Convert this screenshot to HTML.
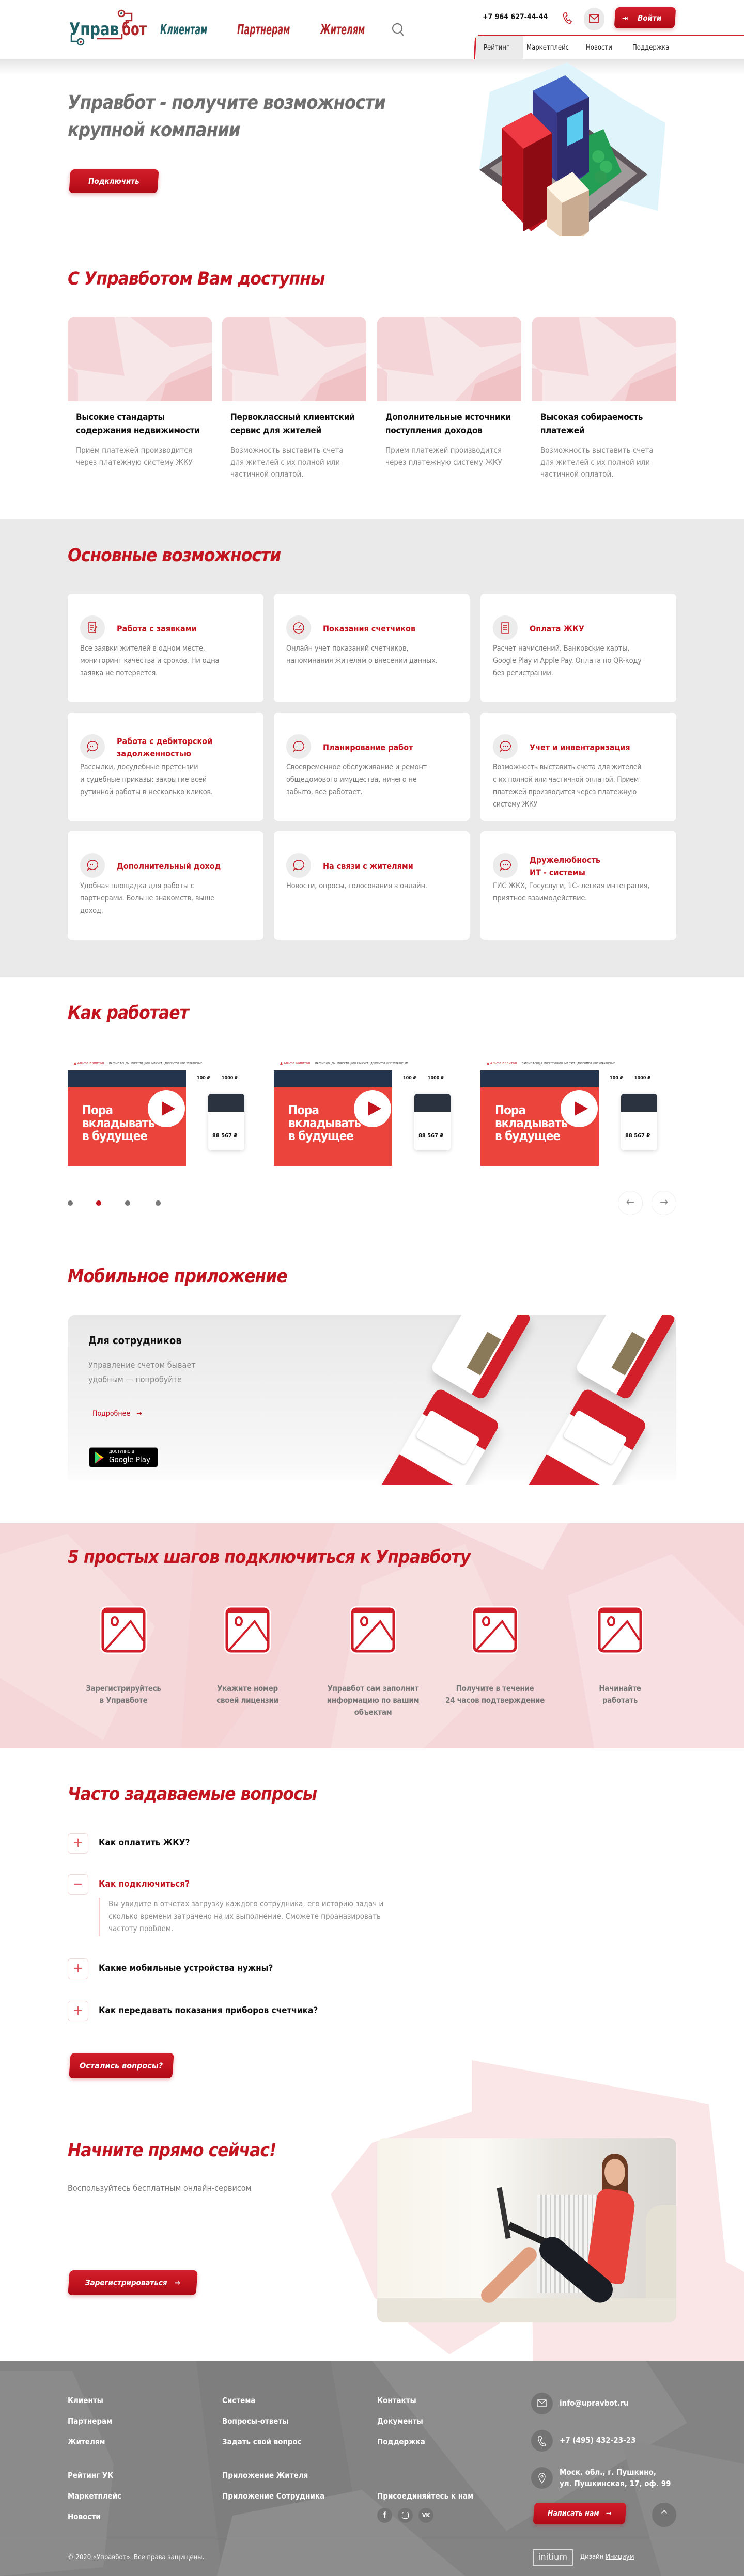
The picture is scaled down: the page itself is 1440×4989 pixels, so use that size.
<!DOCTYPE html>
<html lang="ru"><head><meta charset="utf-8"><title>Управбот</title>
<style>
*{margin:0;padding:0;box-sizing:border-box}
body{width:1440px;height:4989px;position:relative;background:#fff;font-family:"DejaVu Sans Condensed","Liberation Sans",sans-serif;overflow:hidden;color:#222}
.a{position:absolute}
.nw{white-space:nowrap}
.h2{position:absolute;left:131px;font-size:35px;font-weight:bold;font-style:italic;color:#c3151f;letter-spacing:-1px;white-space:nowrap;transform-origin:left}
.btn{position:absolute;background:linear-gradient(180deg,#d31f2a,#b00916);color:#fff;font-style:italic;font-weight:bold;border-radius:8px;transform:skewX(-4deg);display:flex;align-items:center;justify-content:center;font-size:16px;box-shadow:0 3px 8px rgba(176,9,22,.3);white-space:nowrap}
.btn span{transform:skewX(4deg)}
.c2{position:absolute;top:613px;width:279px}
.c2 .img{height:164px;border-radius:14px 14px 0 0;background:#f4d4d6;position:relative;overflow:hidden}
.c2 h4{margin:18px 16px 0;font-size:17px;line-height:26px;color:#111;white-space:nowrap;letter-spacing:-.3px}
.c2 p{margin:14px 16px 0;font-size:15px;line-height:23px;color:#8a8a8a;white-space:nowrap}
.fc{position:absolute;width:379px;height:210px;background:#fff;border-radius:8px}
.fc .ic{position:absolute;left:24px;top:42px;width:48px;height:48px;border-radius:50%;background:#ececec}
.fc h4{position:absolute;left:95px;top:44px;right:10px;font-size:16px;line-height:24px;color:#c3151f;height:48px;display:flex;align-items:center;white-space:nowrap}
.fc p{position:absolute;left:24px;top:94px;right:10px;font-size:14.5px;line-height:24px;color:#7b7b7b;white-space:nowrap;letter-spacing:-.2px}
.vid{position:absolute;top:2043px;width:379px;height:215px;background:#fff;overflow:hidden}
.step{position:absolute;top:3107px;width:220px;text-align:center}
.step svg{margin-left:60px;display:block}
.step p{margin-top:52px;font-size:15px;line-height:23px;color:#777;font-weight:bold;white-space:nowrap;letter-spacing:-.3px}
.fq{position:absolute;left:131px;width:40px;height:40px;border:1px solid #f5d6d8;border-radius:7px;color:#e05a64;font-size:26px;line-height:36px;text-align:center;background:#fff}
.fqt{position:absolute;left:191px;font-size:17px;font-weight:bold;color:#111;white-space:nowrap}
.fl{position:absolute;color:#fff;font-size:15px;font-weight:bold;white-space:nowrap}
.fi{position:absolute;left:1028px;width:42px;height:42px;border-radius:50%;background:#737373}
.sq{display:inline-block;transform:scaleX(.72);transform-origin:left;white-space:nowrap}
</style></head><body>

<!-- HEADER -->
<div class="a" style="left:0;top:0;width:1440px;height:115px;background:#fff;z-index:2"></div>
<div class="a" style="left:0;top:115px;width:1440px;height:30px;background:linear-gradient(#e6e6e6,#fff)"></div>
<svg class="a" style="left:128px;top:18px;z-index:3" width="160" height="75" viewBox="0 0 160 75">
 <circle cx="107" cy="8" r="6" fill="none" stroke="#b0262a" stroke-width="2.5"/><circle cx="107" cy="8" r="2" fill="#1f5f66"/>
 <path d="M113 8 H127 V22 H116 V34" fill="none" stroke="#b0262a" stroke-width="2.5"/>
 <path d="M10 50 V62 H22" fill="none" stroke="#1f5f66" stroke-width="2.5"/>
 <circle cx="28" cy="63" r="6" fill="none" stroke="#1f5f66" stroke-width="2.5"/><circle cx="28" cy="63" r="2" fill="#b0262a"/>
 <path d="M60 57 H108 V48" fill="none" stroke="#b0262a" stroke-width="2.5"/>
 <text x="6" y="50" font-family="DejaVu Sans Condensed,sans-serif" font-weight="bold" font-size="34" fill="#1f5f66" textLength="96" lengthAdjust="spacingAndGlyphs">Управ</text>
 <text x="108" y="50" font-family="DejaVu Sans Condensed,sans-serif" font-weight="bold" font-size="34" fill="#b0262a" textLength="48" lengthAdjust="spacingAndGlyphs">бот</text>
</svg>
<div class="a" style="left:310px;top:42px;font-size:27px;font-weight:bold;font-style:italic;color:#1f5f66;z-index:3"><span class="sq" style="transform:scaleX(.66)">Клиентам</span></div>
<div class="a" style="left:459px;top:42px;font-size:27px;font-weight:bold;font-style:italic;color:#b0262a;z-index:3"><span class="sq" style="transform:scaleX(.66)">Партнерам</span></div>
<div class="a" style="left:620px;top:42px;font-size:27px;font-weight:bold;font-style:italic;color:#b0262a;z-index:3"><span class="sq" style="transform:scaleX(.66)">Жителям</span></div>
<svg class="a" style="left:758px;top:44px;z-index:3" width="26" height="28"><circle cx="11" cy="11" r="9" fill="none" stroke="#777" stroke-width="2.2"/><path d="M17 18 L23 25" stroke="#777" stroke-width="2.4"/></svg>
<div class="a nw" style="left:934px;top:25px;font-size:14px;color:#111;z-index:3;font-weight:bold">+7 964 627-44-44</div>
<svg class="a" style="left:1088px;top:22px;z-index:3" width="22" height="26" viewBox="0 0 22 26"><path d="M5 3 C2 5 2 9 5 15 C8 21 12 24 16 23 L18 20 L14 16 L11 18 C9 16 7 12 7 10 L10 8 L8 3 Z" fill="none" stroke="#c3151f" stroke-width="1.6"/></svg>
<div class="a" style="left:1130px;top:15px;width:40px;height:44px;border-radius:20px;background:#eaeaea;z-index:3"></div>
<svg class="a" style="left:1140px;top:27px;z-index:4" width="20" height="18"><rect x="1" y="2" width="18" height="14" fill="none" stroke="#c3151f" stroke-width="1.8"/><path d="M1 2 L10 10 L19 2" fill="none" stroke="#c3151f" stroke-width="1.8"/></svg>
<div class="btn" style="left:1190px;top:14px;width:117px;height:41px;z-index:3;font-size:15px;justify-content:flex-start;padding-left:14px"><span>⇥&nbsp;&nbsp;&nbsp;&nbsp;Войти</span></div>
<div class="a" style="left:918px;top:67px;width:522px;height:48px;border-top:3px solid #d3202b;border-left:3px solid #d3202b;border-radius:12px 0 0 0;transform:skewX(-3deg);z-index:3"></div>
<div class="a" style="left:922px;top:70px;width:90px;height:45px;background:#ebebeb;z-index:3"></div>
<div class="a nw" style="left:936px;top:85px;font-size:13px;color:#222;z-index:4">Рейтинг</div>
<div class="a nw" style="left:1019px;top:85px;font-size:13px;color:#222;z-index:4">Маркетплейс</div>
<div class="a nw" style="left:1134px;top:85px;font-size:13px;color:#222;z-index:4">Новости</div>
<div class="a nw" style="left:1224px;top:85px;font-size:13px;color:#222;z-index:4">Поддержка</div>

<!-- HERO -->
<div class="a nw" style="left:131px;top:172px;font-size:37px;line-height:53px;font-weight:bold;font-style:italic;color:#6f6f6f;letter-spacing:-1px;transform:scaleX(.97);transform-origin:left">Управбот - получите возможности<br>крупной компании</div>
<div class="btn" style="left:135px;top:328px;width:171px;height:46px;font-size:15px"><span>Подключить</span></div>
<svg class="a" style="left:918px;top:118px" width="380" height="340" viewBox="0 0 380 340">
 <path d="M180 3 L290 75 L370 120 L355 290 L170 240 L10 210 L30 60 Z" fill="#dff4fb"/>
 <path d="M10 211 L180 100 L335 220 L187 340 Z" fill="#5e555a"/>
 <path d="M30 208 L180 112 L315 218 L187 320 Z" fill="#a19b9b"/>
 <path d="M140 180 L250 132 L285 215 L195 282 Z" fill="#259e55"/>
 <path d="M113 58 L176 28 L222 70 L222 215 L176 250 L113 190 Z" fill="#3a3a8c"/>
 <path d="M113 58 L176 28 L222 70 L160 100 Z" fill="#4566c4"/>
 <path d="M160 100 L222 70 L222 215 L160 250 Z" fill="#2e2b6e"/>
 <path d="M180 110 L210 95 L210 150 L180 165 Z" fill="#5bcbf0"/>
 <path d="M53 130 L110 100 L150 140 L150 300 L110 330 L53 270 Z" fill="#b8121c"/>
 <path d="M53 130 L110 100 L150 140 L95 170 Z" fill="#ef3a44"/>
 <path d="M95 170 L150 140 L150 300 L95 330 Z" fill="#8d0c14"/>
 <path d="M140 245 L190 215 L222 250 L222 330 L190 360 L140 320 Z" fill="#e9d3bb"/>
 <path d="M140 245 L190 215 L222 250 L170 275 Z" fill="#fff7e8"/>
 <path d="M170 275 L222 250 L222 330 L170 360 Z" fill="#c9ab92"/>
 <circle cx="240" cy="185" r="12" fill="#38b560"/><circle cx="255" cy="205" r="12" fill="#38b560"/><circle cx="245" cy="225" r="12" fill="#2e9c52"/>
</svg>

<!-- SECTION 2 -->
<div class="h2" style="top:520px">С Управботом Вам доступны</div>
<div class="c2" style="left:131px"><div class="img"><svg width="279" height="164"><path d="M90 0 L120 0 L200 60 L279 50 L279 70 L200 110 L150 164 L20 164 L20 110 L0 90 L0 100 L110 115 Z" fill="#f8e7e8"/><path d="M190 130 L279 95 L279 164 L180 164 Z" fill="#f0c2c6"/></svg></div><h4>Высокие стандарты<br>содержания недвижимости</h4><p>Прием платежей производится<br>через платежную систему ЖКУ</p></div>
<div class="c2" style="left:430px"><div class="img"><svg width="279" height="164"><path d="M90 0 L120 0 L200 60 L279 50 L279 70 L200 110 L150 164 L20 164 L20 110 L0 90 L0 100 L110 115 Z" fill="#f8e7e8"/><path d="M190 130 L279 95 L279 164 L180 164 Z" fill="#f0c2c6"/></svg></div><h4>Первоклассный клиентский<br>сервис для жителей</h4><p>Возможность выставить счета<br>для жителей с их полной или<br>частичной оплатой.</p></div>
<div class="c2" style="left:730px"><div class="img"><svg width="279" height="164"><path d="M90 0 L120 0 L200 60 L279 50 L279 70 L200 110 L150 164 L20 164 L20 110 L0 90 L0 100 L110 115 Z" fill="#f8e7e8"/><path d="M190 130 L279 95 L279 164 L180 164 Z" fill="#f0c2c6"/></svg></div><h4>Дополнительные источники<br>поступления доходов</h4><p>Прием платежей производится<br>через платежную систему ЖКУ</p></div>
<div class="c2" style="left:1030px"><div class="img"><svg width="279" height="164"><path d="M90 0 L120 0 L200 60 L279 50 L279 70 L200 110 L150 164 L20 164 L20 110 L0 90 L0 100 L110 115 Z" fill="#f8e7e8"/><path d="M190 130 L279 95 L279 164 L180 164 Z" fill="#f0c2c6"/></svg></div><h4>Высокая собираемость<br>платежей</h4><p>Возможность выставить счета<br>для жителей с их полной или<br>частичной оплатой.</p></div>

<!-- FEATURES -->
<div class="a" style="left:0;top:1006px;width:1440px;height:886px;background:#eaeaea"></div>
<div class="h2" style="top:1056px">Основные возможности</div>
<div class="fc" style="left:131px;top:1150px"><div class="ic"><svg width="48" height="48"><rect x="17" y="13" width="13" height="20" rx="1" fill="none" stroke="#c3151f" stroke-width="1.4"/><path d="M20 19h7M20 23h7M20 27h4M27 30l6-10" stroke="#c3151f" stroke-width="1.4"/></svg></div><h4>Работа с заявками</h4><p>Все заявки жителей в одном месте,<br>мониторинг качества и сроков. Ни одна<br>заявка не потеряется.</p></div>
<div class="fc" style="left:530px;top:1150px"><div class="ic"><svg width="48" height="48"><circle cx="24" cy="24" r="10" fill="none" stroke="#c3151f" stroke-width="1.5"/><path d="M24 24l4-5M17 28h14" stroke="#c3151f" stroke-width="1.5"/></svg></div><h4>Показания счетчиков</h4><p>Онлайн учет показаний счетчиков,<br>напоминания жителям о внесении данных.</p></div>
<div class="fc" style="left:930px;top:1150px"><div class="ic"><svg width="48" height="48"><rect x="17" y="14" width="14" height="20" fill="none" stroke="#c3151f" stroke-width="1.4"/><path d="M20 19h8M20 23h8M20 27h8" stroke="#c3151f" stroke-width="1.4"/></svg></div><h4>Оплата ЖКУ</h4><p>Расчет начислений. Банковские карты,<br>Google Play и Apple Pay. Оплата по QR-коду<br>без регистрации.</p></div>
<div class="fc" style="left:131px;top:1380px"><div class="ic"><svg width="48" height="48"><path d="M24 14a10 9 0 1 1-6 16l-3 3 1-5a10 9 0 0 1 8-14z" fill="none" stroke="#c3151f" stroke-width="1.4"/><path d="M20 23h1M24 23h1M28 23h1" stroke="#c3151f" stroke-width="2"/></svg></div><h4>Работа с дебиторской<br>задолженностью</h4><p>Рассылки, досудебные претензии<br>и судебные приказы: закрытие всей<br>рутинной работы в несколько кликов.</p></div>
<div class="fc" style="left:530px;top:1380px"><div class="ic"><svg width="48" height="48"><path d="M24 14a10 9 0 1 1-6 16l-3 3 1-5a10 9 0 0 1 8-14z" fill="none" stroke="#c3151f" stroke-width="1.4"/><path d="M20 23h1M24 23h1M28 23h1" stroke="#c3151f" stroke-width="2"/></svg></div><h4>Планирование работ</h4><p>Своевременное обслуживание и ремонт<br>общедомового имущества, ничего не<br>забыто, все работает.</p></div>
<div class="fc" style="left:930px;top:1380px"><div class="ic"><svg width="48" height="48"><path d="M24 14a10 9 0 1 1-6 16l-3 3 1-5a10 9 0 0 1 8-14z" fill="none" stroke="#c3151f" stroke-width="1.4"/><path d="M20 23h1M24 23h1M28 23h1" stroke="#c3151f" stroke-width="2"/></svg></div><h4>Учет и инвентаризация</h4><p style="font-size:14px">Возможность выставить счета для жителей<br>с их полной или частичной оплатой. Прием<br>платежей производится через платежную<br>систему ЖКУ</p></div>
<div class="fc" style="left:131px;top:1610px"><div class="ic"><svg width="48" height="48"><path d="M24 14a10 9 0 1 1-6 16l-3 3 1-5a10 9 0 0 1 8-14z" fill="none" stroke="#c3151f" stroke-width="1.4"/><path d="M20 23h1M24 23h1M28 23h1" stroke="#c3151f" stroke-width="2"/></svg></div><h4>Дополнительный доход</h4><p>Удобная площадка для работы с<br>партнерами. Больше знакомств, выше<br>доход.</p></div>
<div class="fc" style="left:530px;top:1610px"><div class="ic"><svg width="48" height="48"><path d="M24 14a10 9 0 1 1-6 16l-3 3 1-5a10 9 0 0 1 8-14z" fill="none" stroke="#c3151f" stroke-width="1.4"/><path d="M20 23h1M24 23h1M28 23h1" stroke="#c3151f" stroke-width="2"/></svg></div><h4>На связи с жителями</h4><p>Новости, опросы, голосования в онлайн.</p></div>
<div class="fc" style="left:930px;top:1610px"><div class="ic"><svg width="48" height="48"><path d="M24 14a10 9 0 1 1-6 16l-3 3 1-5a10 9 0 0 1 8-14z" fill="none" stroke="#c3151f" stroke-width="1.4"/><path d="M20 23h1M24 23h1M28 23h1" stroke="#c3151f" stroke-width="2"/></svg></div><h4>Дружелюбность<br>ИТ - системы</h4><p>ГИС ЖКХ, Госуслуги, 1С- легкая интеграция,<br>приятное взаимодействие.</p></div>

<!-- HOW IT WORKS -->
<div class="h2" style="top:1942px">Как работает</div>
<div class="vid" style="left:131px"><div class="a" style="left:0;top:30px;width:229px;height:33px;background:#25344d"></div><div class="a nw" style="left:12px;top:12px;font-size:7px;color:#c33">▲ Альфа Капитал</div><div class="a nw" style="left:80px;top:14px;font-size:5px;color:#333">ПАЕВЫЕ ФОНДЫ &nbsp; ИНВЕСТИЦИОННЫЙ СЧЕТ &nbsp; ДОВЕРИТЕЛЬНОЕ УПРАВЛЕНИЕ</div><div class="a" style="left:0;top:63px;width:229px;height:152px;background:#ea443d"></div><div class="a nw" style="left:28px;top:95px;color:#fff;font-weight:bold;font-size:24px;line-height:25px;letter-spacing:-1px">Пора<br>вкладывать<br>в будущее</div><div class="a" style="left:155px;top:68px;width:72px;height:72px;border-radius:50%;background:#fff"></div><svg class="a" style="left:180px;top:88px" width="30" height="32"><path d="M2 2 L28 16 L2 30 Z" fill="#c3151f"/></svg><div class="a" style="left:272px;top:75px;width:70px;height:110px;border-radius:6px;background:#fff;box-shadow:0 2px 8px rgba(0,0,0,.15)"><div style="height:35px;background:#2b3240;border-radius:6px 6px 0 0"></div><div style="margin:40px 0 0 8px;font-weight:bold;font-size:11px;color:#111;white-space:nowrap">88 567 ₽</div></div><div class="a nw" style="left:250px;top:40px;font-size:9px;font-weight:bold">100 ₽&nbsp;&nbsp;&nbsp;&nbsp;&nbsp;&nbsp;&nbsp;&nbsp;1000 ₽</div></div>
<div class="vid" style="left:530px"><div class="a" style="left:0;top:30px;width:229px;height:33px;background:#25344d"></div><div class="a nw" style="left:12px;top:12px;font-size:7px;color:#c33">▲ Альфа Капитал</div><div class="a nw" style="left:80px;top:14px;font-size:5px;color:#333">ПАЕВЫЕ ФОНДЫ &nbsp; ИНВЕСТИЦИОННЫЙ СЧЕТ &nbsp; ДОВЕРИТЕЛЬНОЕ УПРАВЛЕНИЕ</div><div class="a" style="left:0;top:63px;width:229px;height:152px;background:#ea443d"></div><div class="a nw" style="left:28px;top:95px;color:#fff;font-weight:bold;font-size:24px;line-height:25px;letter-spacing:-1px">Пора<br>вкладывать<br>в будущее</div><div class="a" style="left:155px;top:68px;width:72px;height:72px;border-radius:50%;background:#fff"></div><svg class="a" style="left:180px;top:88px" width="30" height="32"><path d="M2 2 L28 16 L2 30 Z" fill="#c3151f"/></svg><div class="a" style="left:272px;top:75px;width:70px;height:110px;border-radius:6px;background:#fff;box-shadow:0 2px 8px rgba(0,0,0,.15)"><div style="height:35px;background:#2b3240;border-radius:6px 6px 0 0"></div><div style="margin:40px 0 0 8px;font-weight:bold;font-size:11px;color:#111;white-space:nowrap">88 567 ₽</div></div><div class="a nw" style="left:250px;top:40px;font-size:9px;font-weight:bold">100 ₽&nbsp;&nbsp;&nbsp;&nbsp;&nbsp;&nbsp;&nbsp;&nbsp;1000 ₽</div></div>
<div class="vid" style="left:930px"><div class="a" style="left:0;top:30px;width:229px;height:33px;background:#25344d"></div><div class="a nw" style="left:12px;top:12px;font-size:7px;color:#c33">▲ Альфа Капитал</div><div class="a nw" style="left:80px;top:14px;font-size:5px;color:#333">ПАЕВЫЕ ФОНДЫ &nbsp; ИНВЕСТИЦИОННЫЙ СЧЕТ &nbsp; ДОВЕРИТЕЛЬНОЕ УПРАВЛЕНИЕ</div><div class="a" style="left:0;top:63px;width:229px;height:152px;background:#ea443d"></div><div class="a nw" style="left:28px;top:95px;color:#fff;font-weight:bold;font-size:24px;line-height:25px;letter-spacing:-1px">Пора<br>вкладывать<br>в будущее</div><div class="a" style="left:155px;top:68px;width:72px;height:72px;border-radius:50%;background:#fff"></div><svg class="a" style="left:180px;top:88px" width="30" height="32"><path d="M2 2 L28 16 L2 30 Z" fill="#c3151f"/></svg><div class="a" style="left:272px;top:75px;width:70px;height:110px;border-radius:6px;background:#fff;box-shadow:0 2px 8px rgba(0,0,0,.15)"><div style="height:35px;background:#2b3240;border-radius:6px 6px 0 0"></div><div style="margin:40px 0 0 8px;font-weight:bold;font-size:11px;color:#111;white-space:nowrap">88 567 ₽</div></div><div class="a nw" style="left:250px;top:40px;font-size:9px;font-weight:bold">100 ₽&nbsp;&nbsp;&nbsp;&nbsp;&nbsp;&nbsp;&nbsp;&nbsp;1000 ₽</div></div>
<div class="a" style="left:131px;top:2325px;width:10px;height:10px;border-radius:50%;background:#777"></div>
<div class="a" style="left:186px;top:2325px;width:10px;height:10px;border-radius:50%;background:#c3151f"></div>
<div class="a" style="left:242px;top:2325px;width:10px;height:10px;border-radius:50%;background:#777"></div>
<div class="a" style="left:301px;top:2325px;width:10px;height:10px;border-radius:50%;background:#777"></div>
<div class="a" style="left:1196px;top:2306px;width:48px;height:48px;border-radius:50%;border:1px solid #eee;color:#888;font-size:22px;text-align:center;line-height:44px">←</div>
<div class="a" style="left:1261px;top:2306px;width:48px;height:48px;border-radius:50%;border:1px solid #eee;color:#888;font-size:22px;text-align:center;line-height:44px">→</div>

<!-- MOBILE APP -->
<div class="h2" style="top:2452px">Мобильное приложение</div>
<div class="a" style="left:131px;top:2546px;width:1178px;height:330px;border-radius:16px;background:linear-gradient(180deg,#e8e8e8,#f9f9f9 90%,#fff);overflow:hidden">
 <div class="a nw" style="left:40px;top:38px;font-size:20px;font-weight:bold;color:#111">Для сотрудников</div>
 <div class="a nw" style="left:40px;top:84px;font-size:16px;line-height:28px;color:#888">Управление счетом бывает<br>удобным — попробуйте</div>
 <div class="a nw" style="left:48px;top:184px;font-size:14px;color:#c3151f">Подробнее&nbsp;&nbsp;&nbsp;<b>→</b></div>
 <div class="a" style="left:41px;top:257px;width:134px;height:39px;background:#000;border-radius:5px;border:1px solid #888"><svg class="a" style="left:8px;top:6px" width="22" height="26"><path d="M2 1 L20 13 L2 25 Z" fill="#3bccff"/><path d="M2 1 L13 13 L2 25Z" fill="#32d874"/><path d="M13 13 L20 13 L2 25Z" fill="#ff3d44"/><path d="M2 1 L20 13 L13 13Z" fill="#ffd400"/></svg><div class="a nw" style="left:38px;top:3px;color:#fff;font-size:8px">ДОСТУПНО В</div><div class="a nw" style="left:38px;top:14px;color:#fff;font-size:15px">Google Play</div></div>
 <div class="a" style="left:740px;top:-40px;width:120px;height:190px;background:#fff;border-radius:14px;transform:rotate(30deg);box-shadow:8px 12px 18px rgba(0,0,0,.18);overflow:hidden"><div style="position:absolute;right:0;top:0;width:26px;height:100%;background:#d31f2a"></div><div style="position:absolute;left:60px;top:70px;width:30px;height:80px;background:#8b7a5a"></div></div>
 <div class="a" style="left:1020px;top:-40px;width:120px;height:190px;background:#fff;border-radius:14px;transform:rotate(30deg);box-shadow:8px 12px 18px rgba(0,0,0,.18);overflow:hidden"><div style="position:absolute;right:0;top:0;width:26px;height:100%;background:#d31f2a"></div><div style="position:absolute;left:60px;top:70px;width:30px;height:80px;background:#8b7a5a"></div></div>
 <div class="a" style="left:650px;top:160px;width:140px;height:230px;background:#fff;border-radius:14px;transform:rotate(30deg);box-shadow:8px 12px 18px rgba(0,0,0,.15);overflow:hidden"><div style="position:absolute;left:0;top:0;width:100%;height:60px;background:#d31f2a"></div><div style="position:absolute;left:10px;top:45px;width:110px;height:60px;background:#fff;border-radius:6px;box-shadow:0 2px 4px rgba(0,0,0,.2)"></div><div style="position:absolute;left:0;top:150px;width:100%;height:80px;background:#d31f2a"></div></div>
 <div class="a" style="left:935px;top:160px;width:140px;height:230px;background:#fff;border-radius:14px;transform:rotate(30deg);box-shadow:8px 12px 18px rgba(0,0,0,.15);overflow:hidden"><div style="position:absolute;left:0;top:0;width:100%;height:60px;background:#d31f2a"></div><div style="position:absolute;left:10px;top:45px;width:110px;height:60px;background:#fff;border-radius:6px;box-shadow:0 2px 4px rgba(0,0,0,.2)"></div><div style="position:absolute;left:0;top:150px;width:100%;height:80px;background:#d31f2a"></div></div>
</div>

<!-- STEPS -->
<div class="a" style="left:0;top:2950px;width:1440px;height:436px;background:#f6d7d9;overflow:hidden"><svg width="1440" height="436"><path d="M0 60 L130 20 L300 200 L200 420 L0 300Z" fill="#f9e2e3" opacity=".6"/><path d="M380 0 L650 0 L520 300 L420 436 L350 436Z" fill="#f3cfd2" opacity=".5"/><path d="M700 120 L900 40 L1000 260 L820 436 L640 436Z" fill="#f9e2e3" opacity=".6"/><path d="M1100 140 L1300 60 L1440 200 L1440 436 L1150 436Z" fill="#fae6e7" opacity=".6"/><path d="M850 0 L1100 0 L1050 90Z" fill="#fae6e7"/></svg></div>
<div class="h2" style="top:2996px">5 простых шагов подключиться к Управботу</div>
<div class="step" style="left:129px"><svg width="100" height="100"><rect x="5" y="4" width="90" height="92" rx="12" fill="#fff"/><rect x="10" y="9" width="80" height="82" rx="8" fill="none" stroke="#d11d27" stroke-width="5"/><rect x="10" y="9" width="80" height="8" fill="#d11d27"/><ellipse cx="33" cy="33" rx="6" ry="8" fill="none" stroke="#d11d27" stroke-width="4"/><path d="M15 88 L64 33 L88 70" fill="none" stroke="#d11d27" stroke-width="4"/></svg><p>Зарегистрируйтесь<br>в Управботе</p></div>
<div class="step" style="left:369px"><svg width="100" height="100"><rect x="5" y="4" width="90" height="92" rx="12" fill="#fff"/><rect x="10" y="9" width="80" height="82" rx="8" fill="none" stroke="#d11d27" stroke-width="5"/><rect x="10" y="9" width="80" height="8" fill="#d11d27"/><ellipse cx="33" cy="33" rx="6" ry="8" fill="none" stroke="#d11d27" stroke-width="4"/><path d="M15 88 L64 33 L88 70" fill="none" stroke="#d11d27" stroke-width="4"/></svg><p>Укажите номер<br>своей лицензии</p></div>
<div class="step" style="left:612px"><svg width="100" height="100"><rect x="5" y="4" width="90" height="92" rx="12" fill="#fff"/><rect x="10" y="9" width="80" height="82" rx="8" fill="none" stroke="#d11d27" stroke-width="5"/><rect x="10" y="9" width="80" height="8" fill="#d11d27"/><ellipse cx="33" cy="33" rx="6" ry="8" fill="none" stroke="#d11d27" stroke-width="4"/><path d="M15 88 L64 33 L88 70" fill="none" stroke="#d11d27" stroke-width="4"/></svg><p>Управбот сам заполнит<br>информацию по вашим<br>объектам</p></div>
<div class="step" style="left:848px"><svg width="100" height="100"><rect x="5" y="4" width="90" height="92" rx="12" fill="#fff"/><rect x="10" y="9" width="80" height="82" rx="8" fill="none" stroke="#d11d27" stroke-width="5"/><rect x="10" y="9" width="80" height="8" fill="#d11d27"/><ellipse cx="33" cy="33" rx="6" ry="8" fill="none" stroke="#d11d27" stroke-width="4"/><path d="M15 88 L64 33 L88 70" fill="none" stroke="#d11d27" stroke-width="4"/></svg><p>Получите в течение<br>24 часов подтверждение</p></div>
<div class="step" style="left:1090px"><svg width="100" height="100"><rect x="5" y="4" width="90" height="92" rx="12" fill="#fff"/><rect x="10" y="9" width="80" height="82" rx="8" fill="none" stroke="#d11d27" stroke-width="5"/><rect x="10" y="9" width="80" height="8" fill="#d11d27"/><ellipse cx="33" cy="33" rx="6" ry="8" fill="none" stroke="#d11d27" stroke-width="4"/><path d="M15 88 L64 33 L88 70" fill="none" stroke="#d11d27" stroke-width="4"/></svg><p>Начинайте<br>работать</p></div>

<!-- FAQ + START bg shapes -->
<svg class="a" style="left:0;top:3980px" width="1440" height="600"><path d="M913 10 L1372 95 L1405 400 L1440 420 L1440 600 L1032 600 L1030 480 L870 580 L725 470 L640 270 L720 170 L913 110Z" fill="#fae6e7"/></svg>
<div class="h2" style="top:3455px">Часто задаваемые вопросы</div>
<div class="fq" style="top:3550px">+</div><div class="fqt" style="top:3559px">Как оплатить ЖКУ?</div>
<div class="fq" style="top:3630px">−</div><div class="fqt" style="top:3639px;color:#c3151f">Как подключиться?</div>
<div class="a" style="left:191px;top:3675px;width:3px;height:75px;background:#f5d0d3"></div>
<div class="a nw" style="left:210px;top:3675px;font-size:15px;line-height:24px;color:#8a8a8a">Вы увидите в отчетах загрузку каждого сотрудника, его историю задач и<br>сколько времени затрачено на их выполнение. Сможете проаназировать<br>частоту проблем.</div>
<div class="fq" style="top:3793px">+</div><div class="fqt" style="top:3802px">Какие мобильные устройства нужны?</div>
<div class="fq" style="top:3875px">+</div><div class="fqt" style="top:3884px">Как передавать показания приборов счетчика?</div>
<div class="btn" style="left:135px;top:3976px;width:200px;height:49px"><span>Остались вопросы?</span></div>

<!-- START NOW -->
<div class="h2" style="top:4145px">Начните прямо сейчас!</div>
<div class="a nw" style="left:131px;top:4228px;font-size:16px;color:#777">Воспользуйтесь бесплатным онлайн-сервисом</div>
<div class="btn" style="left:133px;top:4397px;width:248px;height:48px;font-size:15px"><span>Зарегистрироваться&nbsp;&nbsp;&nbsp;→</span></div>
<div class="a" style="left:730px;top:4141px;width:579px;height:357px;border-radius:14px;overflow:hidden;background:linear-gradient(90deg,#f7f3ea 0%,#fbfaf5 35%,#e9e6e0 60%,#d9d6d1 100%)">
 <div class="a" style="left:310px;top:110px;width:120px;height:190px;background:repeating-linear-gradient(90deg,#f4f4f2 0 6px,#cfcfcd 6px 9px)"></div>
 <div class="a" style="left:520px;top:130px;width:70px;height:200px;background:#e4e0d4;border-radius:30px 0 0 0"></div>
 <div class="a" style="left:0;top:310px;width:579px;height:50px;background:#e9e4da"></div>
 <div class="a" style="left:435px;top:30px;width:50px;height:140px;background:#6a3b22;border-radius:25px 25px 10px 10px"></div>
 <div class="a" style="left:440px;top:40px;width:40px;height:52px;background:#e9b79a;border-radius:50%"></div>
 <div class="a" style="left:415px;top:100px;width:75px;height:180px;background:#e7433a;border-radius:20px 30px 10px 10px;transform:rotate(8deg)"></div>
 <div class="a" style="left:240px;top:95px;width:10px;height:100px;background:#333;transform:rotate(-10deg)"></div>
 <div class="a" style="left:250px;top:185px;width:110px;height:14px;background:#222;transform:rotate(25deg)"></div>
 <div class="a" style="left:300px;top:230px;width:170px;height:50px;background:#1b1d24;border-radius:30px;transform:rotate(40deg)"></div>
 <div class="a" style="left:185px;top:250px;width:140px;height:30px;background:#e0a080;border-radius:15px;transform:rotate(-45deg)"></div>
</div>

<!-- FOOTER -->
<div class="a" style="left:0;top:4572px;width:1440px;height:417px;background:#838383;overflow:hidden"><svg width="1440" height="417"><path d="M0 20 L140 20 L220 200 L200 400 L0 417Z" fill="#8b8b8b"/><path d="M380 0 L640 0 L690 300 L560 417 L430 417Z" fill="#7c7c7c" opacity=".7"/><path d="M720 0 L1250 0 L1330 120 L980 330 L860 180Z" fill="#8d8d8d"/><path d="M1200 150 L1440 200 L1440 417 L1280 417Z" fill="#8b8b8b"/><path d="M450 300 L700 250 L900 417 L420 417Z" fill="#8d8d8d"/></svg></div>
<div class="fl" style="left:131px;top:4640px">Клиенты</div><div class="fl" style="left:131px;top:4680px">Партнерам</div><div class="fl" style="left:131px;top:4720px">Жителям</div>
<div class="fl" style="left:131px;top:4785px">Рейтинг УК</div><div class="fl" style="left:131px;top:4825px">Маркетплейс</div><div class="fl" style="left:131px;top:4865px">Новости</div>
<div class="fl" style="left:430px;top:4640px">Система</div><div class="fl" style="left:430px;top:4680px">Вопросы-ответы</div><div class="fl" style="left:430px;top:4720px">Задать свой вопрос</div>
<div class="fl" style="left:430px;top:4785px">Приложение Жителя</div><div class="fl" style="left:430px;top:4825px">Приложение Сотрудника</div>
<div class="fl" style="left:730px;top:4640px">Контакты</div><div class="fl" style="left:730px;top:4680px">Документы</div><div class="fl" style="left:730px;top:4720px">Поддержка</div>
<div class="fl" style="left:730px;top:4825px">Присоединяйтесь к нам</div>
<div class="a" style="left:730px;top:4857px;width:29px;height:29px;border-radius:50%;background:#737373;color:#fff;font-size:15px;text-align:center;line-height:29px;font-weight:bold">f</div>
<div class="a" style="left:770px;top:4857px;width:29px;height:29px;border-radius:50%;background:#737373"><div style="margin:8px;width:13px;height:13px;border:1.5px solid #fff;border-radius:4px"></div></div>
<div class="a" style="left:810px;top:4857px;width:29px;height:29px;border-radius:50%;background:#737373;color:#fff;font-size:11px;text-align:center;line-height:29px;font-weight:bold">VK</div>
<div class="fi" style="top:4634px"><svg width="42" height="42"><rect x="13" y="14" width="16" height="13" fill="none" stroke="#fff" stroke-width="1.4"/><path d="M13 14 L21 21 L29 14" fill="none" stroke="#fff" stroke-width="1.4"/></svg></div>
<div class="fl" style="left:1083px;top:4645px">info@upravbot.ru</div>
<div class="fi" style="top:4706px"><svg width="42" height="42"><path d="M16 12 C13 14 13 18 16 24 C19 30 23 32 27 31 L28 28 L25 25 L22 27 C20 25 18 21 18 19 L21 17 L19 12 Z" fill="none" stroke="#fff" stroke-width="1.3"/></svg></div>
<div class="fl" style="left:1083px;top:4717px">+7 (495) 432-23-23</div>
<div class="fi" style="top:4778px"><svg width="42" height="42"><path d="M21 31 C16 24 15 21 15 18 A6 6 0 0 1 27 18 C27 21 26 24 21 31Z" fill="none" stroke="#fff" stroke-width="1.3"/><circle cx="21" cy="18" r="2" fill="none" stroke="#fff" stroke-width="1.2"/></svg></div>
<div class="fl" style="left:1083px;top:4777px;line-height:22px">Моск. обл., г. Пушкино,<br>ул. Пушкинская, 17, оф. 99</div>
<div class="btn" style="left:1033px;top:4847px;width:178px;height:42px;font-size:14px"><span>Написать нам&nbsp;&nbsp;&nbsp;→</span></div>
<div class="a" style="left:1262px;top:4847px;width:47px;height:47px;border-radius:50%;background:#737373;color:#fff;font-size:20px;text-align:center;line-height:47px">^</div>
<div class="a" style="left:0;top:4917px;width:1440px;height:1px;background:#aaa"></div>
<div class="a nw" style="left:131px;top:4946px;font-size:13px;color:#fff">© 2020 «Управбот». Все права защищены.</div>
<div class="a" style="left:1031px;top:4937px;width:78px;height:32px;border:2px solid #ddd;color:#eee;font-size:18px;text-align:center;line-height:27px">initium</div>
<div class="a nw" style="left:1123px;top:4945px;font-size:13px;color:#fff">Дизайн <u>Инициум</u></div>
</body></html>
